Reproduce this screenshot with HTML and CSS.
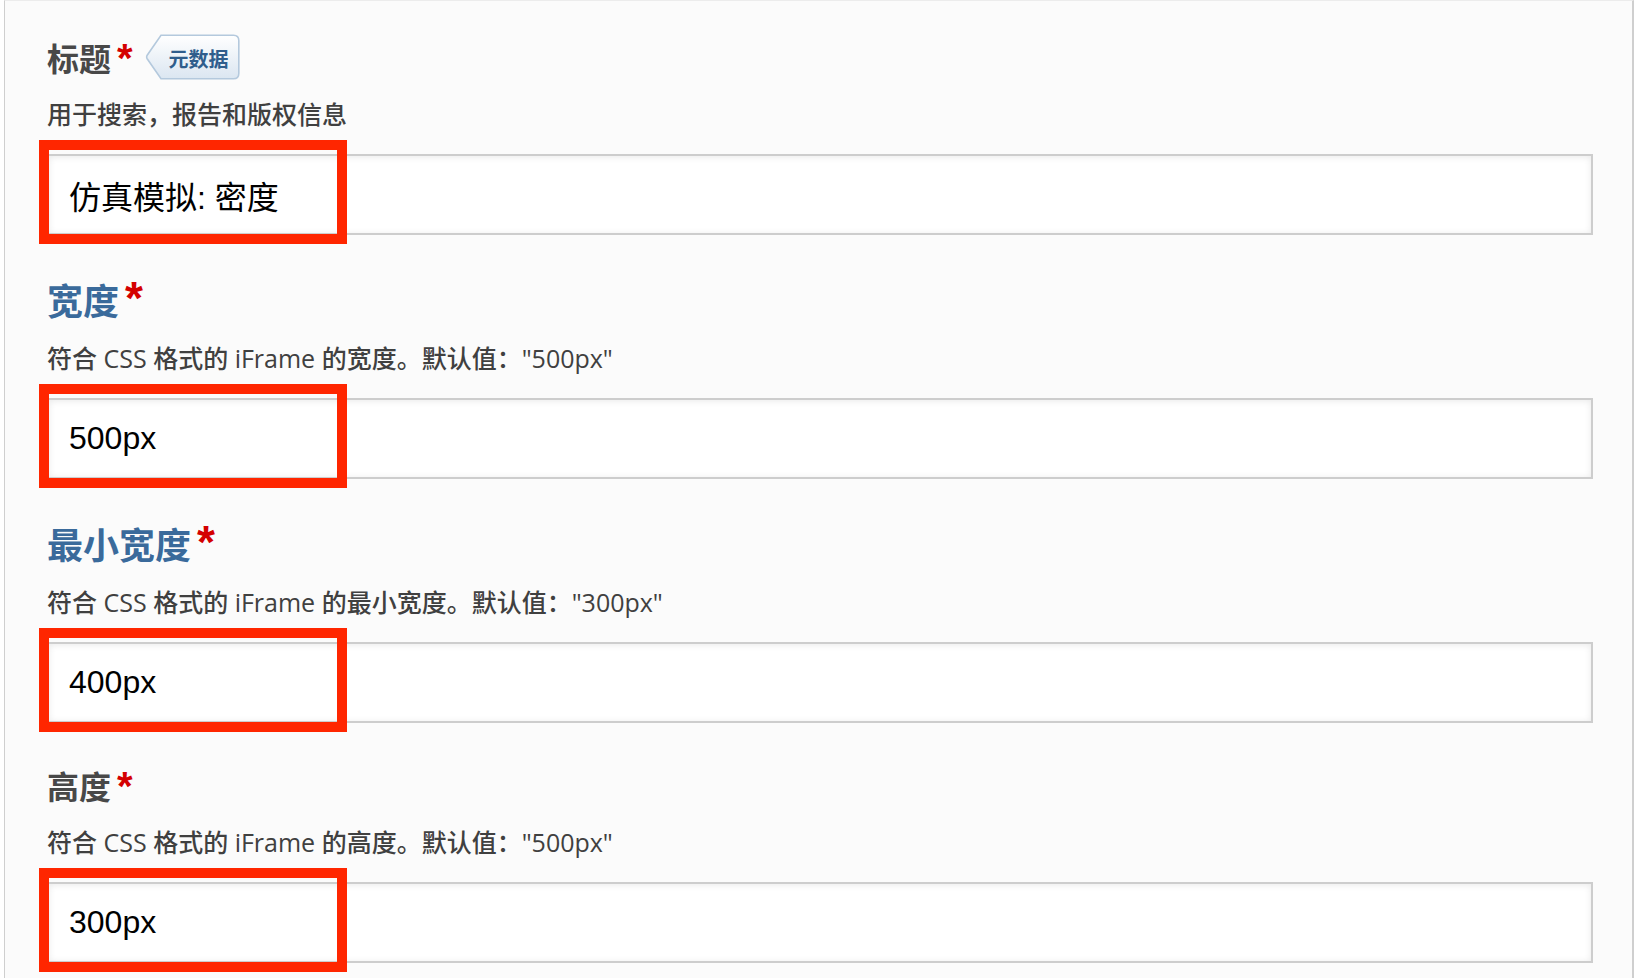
FILE: index.html
```html
<!DOCTYPE html>
<html lang="zh-CN">
<head>
<meta charset="utf-8">
<title>iFrame 设置</title>
<link rel="stylesheet" href="styles.css">
</head>
<body>
<div class="panel">
  <div class="field">
    <div class="label-row">
      <span class="label">标题</span><span class="req">*</span>
      <span class="badge">
        <svg class="badge-bg" viewBox="0 0 95 46" preserveAspectRatio="none" aria-hidden="true">
          <defs>
            <linearGradient id="bg" x1="0" y1="0" x2="0" y2="1">
              <stop offset="0" stop-color="#ffffff"/>
              <stop offset="1" stop-color="#dbe6f1"/>
            </linearGradient>
          </defs>
          <path d="M16 1.2 H88.5 Q93.8 1.2 93.8 6.5 V39.5 Q93.8 44.8 88.5 44.8 H16 L2 24.5 Q1.2 23 2 21.5 Z" fill="url(#bg)" stroke="#b4c9dd" stroke-width="1.6"/>
        </svg>
        <span class="badge-text">元数据</span>
      </span>
    </div>
    <div class="help">用于搜索，报告和版权信息</div>
    <div class="input-wrap">
      <input class="text-input" type="text" value="仿真模拟: 密度">
      <div class="highlight"></div>
    </div>
  </div>

  <div class="field">
    <div class="label-row label-row--link">
      <span class="label">宽度</span><span class="req">*</span>
    </div>
    <div class="help">符合 CSS 格式的 iFrame 的宽度。默认值："500px"</div>
    <div class="input-wrap">
      <input class="text-input" type="text" value="500px">
      <div class="highlight"></div>
    </div>
  </div>

  <div class="field">
    <div class="label-row label-row--link">
      <span class="label">最小宽度</span><span class="req">*</span>
    </div>
    <div class="help">符合 CSS 格式的 iFrame 的最小宽度。默认值："300px"</div>
    <div class="input-wrap">
      <input class="text-input" type="text" value="400px">
      <div class="highlight"></div>
    </div>
  </div>

  <div class="field">
    <div class="label-row">
      <span class="label">高度</span><span class="req">*</span>
    </div>
    <div class="help">符合 CSS 格式的 iFrame 的高度。默认值："500px"</div>
    <div class="input-wrap">
      <input class="text-input" type="text" value="300px">
      <div class="highlight"></div>
    </div>
  </div>
</div>
</body>
</html>
```

FILE: styles.css
```css
html, body {
  margin: 0;
  padding: 0;
  background: #ffffff;
  overflow: hidden;
}

body {
  font-family: "Open Sans", "Noto Sans CJK SC", sans-serif;
}

.panel {
  box-sizing: border-box;
  margin-left: 4px;
  min-height: 100vh;
  background: #fbfbfb;
  border-left: 1px solid #cfcfcf;
  border-right: 2px solid #cfcfcf;
  border-top: 1px solid #ececec;
  padding: 36px 39px 0 42px;
  display: flex;
  flex-direction: column;
  gap: 42px;
}

.field {
  display: flex;
  flex-direction: column;
}

.label-row {
  display: flex;
  align-items: flex-start;
  height: 40px;
  margin-bottom: 22px;
}

.label {
  font-family: "Noto Sans CJK SC", sans-serif;
  font-weight: 700;
  font-size: 32px;
  line-height: 40px;
  color: #484848;
}

.req {
  font-family: "Liberation Sans", sans-serif;
  font-weight: 700;
  font-size: 40px;
  line-height: 1;
  color: #d40000;
  margin-left: 6px;
  margin-top: 1px;
}

.label-row--link {
  height: 44px;
}

.label-row--link .label {
  font-size: 36px;
  line-height: 44px;
  color: #3a6a9b;
}

.label-row--link .req {
  font-size: 46px;
  margin-top: -2px;
  margin-left: 6px;
}

.badge {
  position: relative;
  display: flex;
  align-items: center;
  box-sizing: border-box;
  width: 95px;
  height: 46px;
  margin-left: 12px;
  margin-top: -3px;
  padding-left: 24px;
}

.badge-bg {
  position: absolute;
  left: 0;
  top: 0;
  width: 100%;
  height: 100%;
}

.badge-text {
  position: relative;
  font-family: "Noto Sans CJK SC", sans-serif;
  font-weight: 700;
  font-size: 20px;
  line-height: 1;
  color: #2f5d8c;
  margin-top: 4px;
}

.help {
  font-family: "Open Sans", "Noto Sans CJK SC", sans-serif;
  font-weight: 500;
  font-size: 25px;
  line-height: 30px;
  color: #404040;
  margin-bottom: 25px;
  white-space: nowrap;
}

.input-wrap {
  position: relative;
}

.text-input {
  display: block;
  box-sizing: border-box;
  width: 100%;
  height: 81px;
  margin: 0;
  padding: 0 20px;
  border: 2px solid #cdcdcd;
  border-radius: 0;
  background: #ffffff;
  box-shadow: inset 0 1px 7px rgba(0, 0, 0, 0.09);
  font-family: "Liberation Sans", "Noto Sans CJK SC", sans-serif;
  font-size: 32px;
  color: #000000;
  outline: none;
}

.highlight {
  position: absolute;
  left: -8px;
  top: -14px;
  width: 308px;
  height: 104px;
  box-sizing: border-box;
  border: 10px solid #ff2600;
  pointer-events: none;
}
```
